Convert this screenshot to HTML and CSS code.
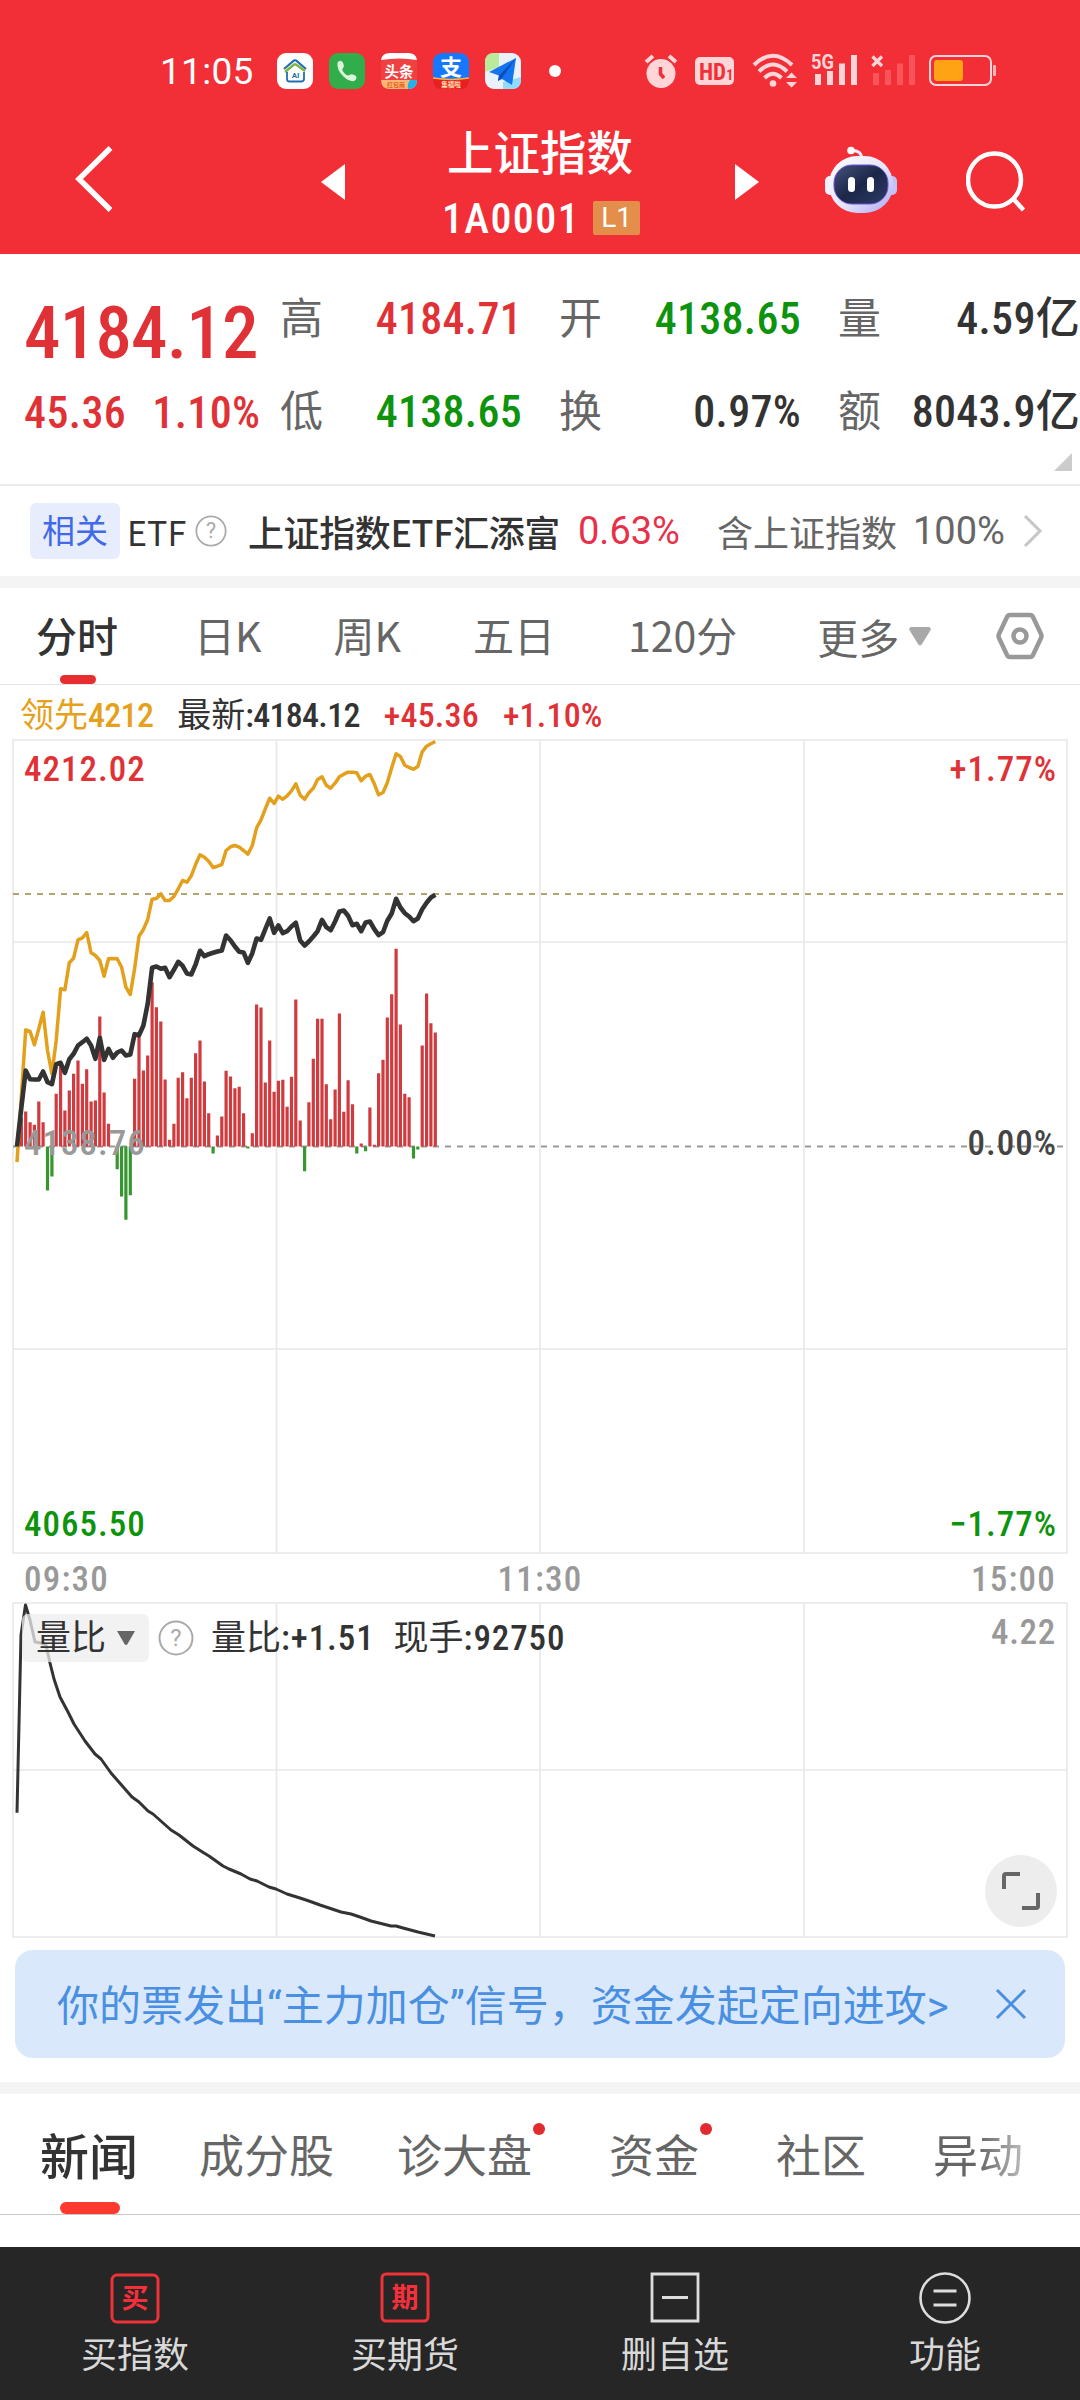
FILE: index.html
```html
<!DOCTYPE html>
<html lang="zh-CN">
<head>
    <meta charset="UTF-8">
    <meta name="viewport" content="width=device-width, initial-scale=1.0">
    <title>上证指数 1A0001</title>
    <link rel="stylesheet" href="styles.css">
</head>
<body>

    <header class="top">
        <div class="status">
            <span class="clock">11:05</span>
            <div class="apps">
                <svg class="app" viewBox="0 0 36 36">
                    <rect width="36" height="36" rx="9" fill="#fff"/>
                    <path d="M7 16 L17 7.500 Q18 7 19 7.500 L29 16" fill="none" stroke="#1f6fb5" stroke-width="2.200"/>
                    <path d="M8 19 L17 11.500 Q18 11 19 11.500 L28 18" fill="none" stroke="#7cb342" stroke-width="2.400"/>
                    <path d="M10 19 V26 Q10 28.500 12.500 28.500 H24 Q27 28.500 27 26 V19" fill="none" stroke="#1f6fb5" stroke-width="1.800"/>
                    <text x="18.500" y="25" text-anchor="middle" font-size="8" font-weight="700" fill="#1f6fb5">AI</text>
                </svg>
                <svg class="app" viewBox="0 0 36 36">
                    <rect width="36" height="36" rx="9" fill="#32ad4b"/>
                    <path d="M8.500 9.500 q2.500 -3 5 -.5 q2.500 4 .5 6 q-1.500 1.500 0 3.500 q2 3 4.500 4 q1.500 0 3 -1 q2 -1 5.500 1.500 q1.500 3 -2 5 q-4.500 1 -10.500 -4.500 q-7 -6.500 -6 -14z" fill="#d9f5dc"/>
                </svg>
                <svg class="app" viewBox="0 0 36 36">
                    <rect width="36" height="36" rx="9" fill="#f04142"/>
                    <path d="M0 7 Q1 0 9 0 H27 Q35 0 36 7 Q18 4 0 7z" fill="#fff"/>
                    <text x="18" y="24" text-anchor="middle" font-size="14.500" font-weight="700" fill="#fff">头条</text>
                    <path d="M0 27 H36 Q36 36 27 36 H9 Q0 36 0 27z" fill="#ffb677"/>
                    <text x="15" y="34" text-anchor="middle" font-size="6" font-weight="700" fill="#e0631d">红包雨</text>
                    <path d="M29 27 H36 Q36 36 27 36 Q26 31 29 27z" fill="#1fb4e8"/>
                </svg>
                <svg class="app" viewBox="0 0 36 36">
                    <rect width="36" height="36" rx="9" fill="#1677ff"/>
                    <text x="18" y="22" text-anchor="middle" font-size="22" font-weight="700" fill="#fff">支</text>
                    <path d="M0 25 Q18 28 36 25 V27 Q36 36 27 36 H9 Q0 36 0 27z" fill="#e8201e"/>
                    <path d="M0 25 Q18 28 36 25" fill="none" stroke="#ffb34d" stroke-width="1.500"/>
                    <text x="18" y="34" text-anchor="middle" font-size="6.500" font-weight="700" fill="#ffe2b0">集福啦</text>
                </svg>
                <svg class="app" viewBox="0 0 36 36">
                    <rect width="36" height="36" rx="9" fill="#e9f2fb"/>
                    <path d="M9 0 H14 V14 L0 19 V9 Q0 0 9 0z" fill="#b9eb9a"/>
                    <path d="M18 29 L36 24 V27 Q36 36 27 36 H18z" fill="#8fdcff"/>
                    <path d="M31 5 L4 19 L14 22.500 L13 28 L17 26 L27 32z" fill="#1573f0"/>
                    <path d="M31 5 L14 22.500 L13 28 L17 25z" fill="#0a4fbd"/>
                </svg>
            </div>
            <i class="more-dot"></i>

            <div class="signals">
                <svg class="alarm" width="34" height="36" viewBox="0 0 34 36">
                    <circle cx="17" cy="20.500" r="14.500" fill="#ffd5d8"/>
                    <path d="M2 9 L9 3 M32 9 L25 3" stroke="#ffd5d8" stroke-width="4"/>
                    <path d="M16.500 14 V21 L20 25" fill="none" stroke="#f22f37" stroke-width="3.500"/>
                </svg>
                <svg class="hd" width="39" height="36" viewBox="0 0 39 36">
                    <rect y="4" width="39" height="28" rx="5" fill="#ffd5d8"/>
                    <text x="4" y="26.500">HD<tspan>1</tspan></text>
                </svg>
                <svg class="wifi" width="46" height="36" viewBox="0 0 46 36">
                    <g fill="none" stroke="#ffd5d8" stroke-width="4">
                        <path d="M2 12 Q21 -6.500 40 12"/>
                        <path d="M7 18.500 Q21 4.500 35 18.500"/>
                        <path d="M12.500 25 Q21 16.500 29.500 25"/>
                    </g>
                    <circle cx="21" cy="30.500" r="3.300" fill="#ffd5d8"/>
                    <path d="M34 25 L39.500 19.500 L45 25z M34 29 L39.500 34.500 L45 29z" fill="#ffd5d8"/>
                </svg>
                <svg class="net" width="48" height="36" viewBox="0 0 48 36">
                    <text x="0" y="16" font-size="20" font-weight="700" textLength="23" lengthAdjust="spacingAndGlyphs" fill="#ffd5d8">5G</text>
                    <path d="M4 21 h6 v11 h-6z M16 18 h6 v14 h-6z M28 10.500 h6 v21.500 h-6z M40 2 h6 v30 h-6z" fill="#ffd5d8"/>
                </svg>
                <svg width="46" height="36" viewBox="0 0 46 36">
                    <path d="M1.500 3.500 L11 13 M11 3.500 L1.500 13" stroke="#ffd5d8" stroke-width="3.200"/>
                    <path d="M2 20 h6 v12 h-6z M14 17 h6 v15 h-6z M26 10.500 h6 v21.500 h-6z M38 2 h6 v30 h-6z" fill="#f9545a"/>
                </svg>
                <svg width="68" height="36" viewBox="0 0 68 36">
                    <rect x="1" y="3" width="61" height="29" rx="6" fill="none" stroke="#ffd5d8" stroke-width="2"/>
                    <rect x="5" y="7" width="29" height="21" rx="3" fill="#ffa314"/>
                    <rect x="64" y="12" width="3" height="11" rx="1" fill="#ffb6ba"/>
                </svg>
            </div>
        </div>

        <nav class="title-bar">
            <svg class="back" width="38" height="66" viewBox="0 0 38 66"><path d="M35.500 2 L4 33 L35.500 64" fill="none" stroke="#fff" stroke-width="5.500"/></svg>
            <svg class="prev" width="24" height="36" viewBox="0 0 24 36"><path d="M24 0 V36 L0 18z" fill="#fff"/></svg>
            <div class="title">
                <h1>上证指数</h1>
                <p><span class="code">1A0001</span><span class="level">L1</span></p>
            </div>
            <svg class="next" width="24" height="36" viewBox="0 0 24 36"><path d="M0 0 V36 L24 18z" fill="#fff"/></svg>
            <svg class="robot" width="72" height="68" viewBox="0 0 72 68">
                <defs>
                    <linearGradient id="shell" x1="0" y1="0" x2="1" y2="1">
                        <stop offset="0" stop-color="#fff"/>
                        <stop offset=".55" stop-color="#e6e4fb"/>
                        <stop offset="1" stop-color="#a9a6f2"/>
                    </linearGradient>
                    <linearGradient id="face" x1="0" y1="0" x2="1" y2="1">
                        <stop offset="0" stop-color="#46527c"/>
                        <stop offset=".5" stop-color="#1c2748"/>
                        <stop offset="1" stop-color="#2c3a66"/>
                    </linearGradient>
                </defs>
                <path d="M26 4.500 Q37 4 36.500 13" fill="none" stroke="#efeafc" stroke-width="3"/>
                <circle cx="26" cy="4.500" r="3.800" fill="#fff"/>
                <rect x="0" y="30" width="12" height="19" rx="5" fill="#f0effd"/>
                <rect x="60" y="30" width="12" height="19" rx="5" fill="#bfc3fb"/>
                <rect x="4" y="10" width="64" height="57" rx="28" fill="url(#shell)"/>
                <rect x="9" y="19" width="54" height="39" rx="18" fill="url(#face)" stroke="#6a55d8" stroke-width="1"/>
                <rect x="23" y="31" width="7" height="15" rx="3.500" fill="#fff"/>
                <rect x="42" y="31" width="7" height="15" rx="3.500" fill="#fff"/>
            </svg>
            <svg class="search" width="60" height="62" viewBox="0 0 60 62">
                <circle cx="28.500" cy="29" r="26.500" fill="none" stroke="#fff" stroke-width="4.500"/>
                <path d="M46.500 47 L57.500 59" stroke="#fff" stroke-width="4.500"/>
            </svg>
        </nav>
    </header>

    <section class="quote">
        <div class="price">
            <strong>4184.12</strong>
            <p><span>45.36</span><span>1.10%</span></p>
        </div>
        <dl>
            <div><dt>高</dt><dd class="up">4184.71</dd></div>
            <div><dt>低</dt><dd class="down">4138.65</dd></div>
        </dl>
        <dl>
            <div><dt>开</dt><dd class="down">4138.65</dd></div>
            <div><dt>换</dt><dd>0.97%</dd></div>
        </dl>
        <dl>
            <div><dt>量</dt><dd>4.59亿</dd></div>
            <div><dt>额</dt><dd>8043.9亿</dd></div>
        </dl>
        <i class="corner"></i>
    </section>

    <section class="etf">
        <span class="tag">相关</span>
        <span class="etf-label">ETF</span>
        <svg class="help" viewBox="0 0 36 36"><circle cx="18" cy="18" r="16.500"/><text x="18" y="26">?</text></svg>
        <span class="etf-name">上证指数ETF汇添富</span>
        <span class="etf-rate">0.63%</span>
        <span class="etf-part">含上证指数</span>
        <span class="etf-pct">100%</span>
        <svg class="arrow" width="20" height="34" viewBox="0 0 20 34"><path d="M2 2 L17 17 L2 32" fill="none" stroke="#c6c6c6" stroke-width="3"/></svg>
    </section>

    <nav class="periods">
        <a class="active">分时</a>
        <a>日K</a>
        <a>周K</a>
        <a>五日</a>
        <a class="min">120分</a>
        <a class="more">更多<svg width="22" height="19" viewBox="0 0 22 19"><path d="M2 0 H20 Q23 1 21 4 L13 17 Q11 20 9 17 L1 4 Q-1 1 2 0z" fill="#a8a8a8"/></svg></a>
        <svg class="gear" width="48" height="48" viewBox="0 0 48 48">
            <path d="M14 3 H34 Q36 3 37 5 L45 22 Q46 24 45 26 L37 43 Q36 45 34 45 H14 Q12 45 11 43 L3 26 Q2 24 3 22 L11 5 Q12 3 14 3z" fill="none" stroke="#999" stroke-width="4.500"/>
            <circle cx="24" cy="24" r="6.500" fill="none" stroke="#999" stroke-width="4.500"/>
        </svg>
    </nav>

    <p class="legend">
        <span class="lead">领先<b>4212</b></span>
        <span class="last">最新<b>:4184.12</b></span>
        <span class="up"><b>+45.36</b></span>
        <span class="up"><b>+1.10%</b></span>
    </p>

    <section class="chart">
        <svg id="minute" width="1056" height="815" viewBox="0 0 1056 815">
            <path class="grid" d="M1 1 H1055 V814 H1 Z M1 203 H1055 M1 610 H1055 M264.500 1 V814 M528 1 V814 M792 1 V814"/>
            <path class="dash now" d="M1 155 H1055"/>
            <path class="dash zero" d="M1 407.500 H1055"/>
            <path id="inflow" class="bar-up"/>
            <path id="outflow" class="bar-down"/>
            <polyline id="lead" class="line-lead"/>
            <polyline id="price" class="line-price"/>
        </svg>
        <span class="mark tl up">4212.02</span>
        <span class="mark tr up">+1.77%</span>
        <span class="mark ml">4138.76</span>
        <span class="mark mr">0.00%</span>
        <span class="mark bl down">4065.50</span>
        <span class="mark br down">−1.77%</span>
    </section>

    <div class="hours"><span>09:30</span><span>11:30</span><span>15:00</span></div>

    <section class="ratio">
        <svg width="1056" height="336" viewBox="12 1602 1056 336">
            <path class="grid" d="M13 1603 H1067 V1937 H13 Z M13 1770 H1067 M276.500 1603 V1937 M540 1603 V1937 M804 1603 V1937"/>
            <polyline class="line-ratio" points="17,1812.700 21,1635 25.500,1605 30,1620 35,1642 41,1643 46,1645 50,1663 54,1679 60,1697 68,1712 74,1724 85,1741 95,1754 101,1759 111,1773 118,1781 132,1797 139,1802 148,1811 153,1814 171,1830 179,1835 193,1846 204,1853 209,1856 223,1866 229,1869 241,1874 250,1879 257,1881 269,1887 276,1889 287,1894 300,1898 309,1901 320,1905 332,1909 341,1912 351,1914 360,1917 371,1921 379,1923 391,1926 396,1926 403,1928 418,1932 435,1936"/>
        </svg>
        <div class="ratio-head">
            <span class="chip">量比<svg width="18" height="14" viewBox="0 0 18 14"><path d="M0 0 H18 L10.500 13 Q9 15 7.500 13z" fill="#666"/></svg></span>
            <svg class="help" viewBox="0 0 36 36"><circle cx="18" cy="18" r="16.500"/><text x="18" y="26">?</text></svg>
            <span class="ratio-val">量比<b>:+1.51</b></span>
            <span class="hand-val">现手<b>:92750</b></span>
            <span class="ratio-max">4.22</span>
        </div>
        <button class="expand"><svg width="38" height="38" viewBox="0 0 38 38"><path d="M2 17 V4 Q2 2 4 2 H18 M36 21 V34 Q36 36 34 36 H20" fill="none" stroke="#666" stroke-width="4"/></svg></button>
    </section>

    <div class="banner">
        <span>你的票发出“主力加仓”信号，资金发起定向进攻&gt;</span>
        <svg width="32" height="32" viewBox="0 0 32 32"><path d="M2 2 L30 30 M30 2 L2 30" stroke="#4a90e2" stroke-width="3"/></svg>
    </div>

    <nav class="news">
        <a class="active">新闻</a>
        <a>成分股</a>
        <a class="dot">诊大盘</a>
        <a class="dot">资金</a>
        <a>社区</a>
        <a class="fade">异动</a>
    </nav>

    <footer class="actions">
        <a><svg width="50" height="52" viewBox="0 0 50 52"><rect x="2" y="3" width="46" height="47" rx="5" fill="none" stroke="#ee3338" stroke-width="3"/><text x="25" y="36" text-anchor="middle" font-size="27" font-weight="700" fill="#f5303a">买</text></svg>买指数</a>
        <a><svg width="50" height="52" viewBox="0 0 50 52"><rect x="2" y="2" width="46" height="47" rx="4" fill="none" stroke="#ee3338" stroke-width="3"/><text x="25" y="35" text-anchor="middle" font-size="27" font-weight="700" fill="#f5303a">期</text></svg>买期货</a>
        <a><svg width="50" height="52" viewBox="0 0 50 52"><path d="M2 2 H48 V49 H2 Z M12 25.500 H38" fill="none" stroke="#ddd" stroke-width="2.800"/></svg>删自选</a>
        <a><svg width="52" height="52" viewBox="0 0 52 52"><circle cx="26" cy="26" r="24.500" fill="none" stroke="#ddd" stroke-width="2.600"/><path d="M14.500 19 H37.500 M14.500 33 H37.500" stroke="#ddd" stroke-width="2.800"/></svg>功能</a>
    </footer>

    <script src="chart.js"></script>
</body>
</html>
```

FILE: styles.css
```css
* {
    box-sizing: border-box;
    margin: 0;
    padding: 0;
}
body {
    width: 1080px;
    height: 2400px;
    overflow: hidden;
    background: #fff;
    color: #333;
    font-family: Roboto, "Noto Sans CJK SC", sans-serif;
    white-space: nowrap;
}
svg {
    display: block;
    flex: none;
}
b {
    font-weight: 500;
}
.up {
    color: #e03236;
}
.down {
    color: #0d930d;
}

/* narrow figures */
.code,
.price,
.quote dd,
.legend b,
.mark,
.hours,
.ratio-head b,
.ratio-max {
    font-stretch: 87%;
}

/* red header */
.top {
    height: 254px;
    background: #f22f37;
    color: #fff;
}
.status {
    display: flex;
    align-items: center;
    height: 108px;
    padding: 34px 83px 0 160px;
}
.clock {
    width: 117px;
    font-size: 37px;
    letter-spacing: 0.300px;
}
.apps {
    display: flex;
    gap: 16px;
}
.app {
    width: 36px;
    height: 36px;
}
.more-dot {
    width: 12px;
    height: 12px;
    margin-left: 28px;
    border-radius: 50%;
    background: #fff;
}
.signals {
    display: flex;
    margin-left: auto;
    gap: 12px;
}
.alarm {
    margin-right: 5px;
}
.hd {
    margin-right: 6px;
}
.hd text {
    font-size: 23px;
    font-weight: 700;
    font-stretch: 75%;
    fill: #f22f37;
}
.hd tspan {
    font-size: 14px;
}
.wifi {
    margin-right: 1px;
}
.net {
    overflow: visible;
}
.title-bar {
    display: flex;
    height: 146px;
}
.back {
    margin: 38px 0 0 75px;
}
.prev {
    margin: 56px 0 0 208px;
}
.title {
    width: 390px;
    text-align: center;
}
.title h1 {
    height: 68px;
    padding-top: 8px;
    font-size: 46.500px;
    line-height: 76px;
    font-weight: 450;
}
.title p {
    display: flex;
    justify-content: center;
    align-items: center;
    height: 84px;
    padding-left: 2px;
}
.code {
    font-size: 42px;
    font-weight: 500;
    letter-spacing: 1.400px;
}
.level {
    width: 47px;
    height: 34px;
    margin-left: 13px;
    border-radius: 2px;
    background: #e38e4a;
    font-size: 28px;
    line-height: 34px;
}
.next {
    margin-top: 56px;
}
.robot {
    margin: 38px 0 0 66px;
}
.search {
    margin: 43px 0 0 69px;
}

/* quote */
.quote {
    position: relative;
    display: flex;
    gap: 37px;
    height: 232px;
    padding: 17px 0 0 24px;
    border-bottom: 2px solid #ebebeb;
}
.price {
    width: 256px;
    margin-right: -37px;
    color: #e03236;
}
.price strong {
    display: block;
    height: 100px;
    padding-top: 14px;
    font-size: 73px;
    line-height: 96px;
    font-weight: 500;
    letter-spacing: -0.800px;
}
.price p {
    display: flex;
    gap: 26px;
    font-size: 44px;
    line-height: 84px;
    font-weight: 500;
    letter-spacing: 0.400px;
}
.quote dl {
    width: 242px;
    padding-top: 4px;
}
.quote dl div {
    display: flex;
    justify-content: space-between;
    height: 93px;
    line-height: 89px;
    font-size: 44px;
}
.quote dt {
    font-size: 43px;
    color: #666;
}
.quote dd {
    font-weight: 500;
    letter-spacing: 0.300px;
}
.corner {
    position: absolute;
    right: 8px;
    bottom: 13px;
    border: 9px solid transparent;
    border-right-color: #ccc;
    border-bottom-color: #ccc;
}
.etf {
    display: flex;
    align-items: center;
    height: 102px;
    padding-left: 30px;
    border-bottom: 12px solid #f4f4f4;
    font-size: 36px;
}
.tag {
    width: 90px;
    height: 56px;
    border-radius: 6px;
    background: #e7edfd;
    color: #4169e8;
    font-size: 33px;
    line-height: 58px;
    text-align: center;
}
.etf-label {
    width: 68px;
    margin-left: 7px;
    font-family: "Noto Sans CJK SC", sans-serif;
    font-size: 34px;
}
.help {
    width: 32px;
    height: 32px;
}
.help circle {
    fill: none;
    stroke: #aaa;
    stroke-width: 2;
}
.help text {
    font-size: 24px;
    text-anchor: middle;
    fill: #aaa;
}
.etf-name {
    width: 330px;
    margin-left: 21px;
    font-family: "Noto Sans CJK SC", sans-serif;
    font-weight: 450;
    letter-spacing: -0.400px;
}
.etf-rate {
    width: 139px;
    color: #e8304a;
    font-size: 38px;
}
.etf-part {
    width: 196px;
    color: #666;
}
.etf-pct {
    width: 110px;
    color: #666;
    font-size: 38px;
}

/* period tabs */
.periods {
    display: flex;
    height: 97px;
    border-bottom: 1px solid #e4e4e4;
    font-family: "Noto Sans CJK SC", sans-serif;
    font-size: 41px;
    line-height: 92px;
    color: #666;
}
.periods a {
    margin-right: 72px;
}
.periods .active,
.news .active {
    position: relative;
    color: #333;
    font-weight: 500;
}
.periods .active {
    margin-left: 36px;
    margin-right: 76px;
}
.periods .active::after {
    content: "";
    position: absolute;
    left: 24px;
    bottom: 0;
    width: 36px;
    height: 9px;
    border-radius: 5px;
    background: #e82d30;
}
.periods .min {
    margin-left: 1px;
    margin-right: 80px;
}
.periods .more {
    display: flex;
    align-items: center;
    gap: 10px;
    margin-right: 65px;
}
.gear {
    margin-top: 24px;
}
.legend {
    display: flex;
    height: 54px;
    padding-left: 20px;
    font-size: 34px;
    line-height: 60px;
}
.legend span {
    margin-right: 24px;
}
.legend b {
    letter-spacing: -0.700px;
}
.legend .up b {
    letter-spacing: 0.200px;
}
.legend .lead {
    color: #e5a11c;
}

/* minute chart */
.chart {
    position: relative;
    height: 815px;
    margin-left: 12px;
}
.grid {
    fill: none;
    stroke: #e8e8e8;
    stroke-width: 1.600px;
}
.dash {
    fill: none;
    stroke: #999;
    stroke-width: 2;
    stroke-dasharray: 6 6;
}
.now {
    stroke: #b5a273;
}
.bar-up,
.bar-down {
    fill: none;
    stroke-width: 3.200px;
    stroke: #cf3b3e;
}
.bar-down {
    stroke: #37962f;
}
.line-lead,
.line-price,
.line-ratio {
    fill: none;
    stroke: #e2a01c;
    stroke-width: 3.500px;
    stroke-linejoin: round;
}
.line-price {
    stroke: #333;
    stroke-width: 4.600px;
}
.line-ratio {
    stroke: #333;
    stroke-width: 3px;
}
.mark {
    position: absolute;
    font-size: 35px;
    line-height: 40px;
    font-weight: 500;
    letter-spacing: 1px;
}
.tl, .ml, .bl {
    left: 12px;
}
.tr, .mr, .br {
    right: 23px;
}
.tl, .tr {
    top: 11px;
}
.ml, .mr {
    top: 385px;
}
.ml {
    color: #999;
}
.mr {
    color: #444;
}
.bl, .br {
    bottom: 9px;
}
.hours {
    display: grid;
    grid-template-columns: 1fr 1fr 1fr;
    height: 48px;
    padding: 0 24px;
    font-size: 35px;
    line-height: 51px;
    font-weight: 500;
    letter-spacing: 1.200px;
    color: #999;
}
.hours span:nth-child(2) {
    text-align: center;
}
.hours span:nth-child(3) {
    text-align: right;
}
.ratio {
    position: relative;
    height: 348px;
    margin-left: 12px;
}
.ratio-head {
    position: absolute;
    top: 12px;
    left: 10px;
    right: 24px;
    display: flex;
    align-items: center;
    height: 48px;
    font-size: 35px;
    line-height: 49px;
}
.ratio-head b {
    letter-spacing: 0.900px;
}
.chip {
    display: flex;
    align-items: center;
    gap: 11px;
    width: 127px;
    height: 48px;
    padding-left: 14px;
    border-radius: 6px;
    background: rgba(238, 238, 238, 0.750);
}
.ratio-head .help {
    width: 36px;
    height: 36px;
    margin-left: 9px;
}
.ratio-val {
    margin-left: 17px;
}
.hand-val {
    margin-left: 19px;
}
.ratio-max {
    margin: -11px 0 0 auto;
    font-weight: 500;
    letter-spacing: 0.700px;
    color: #999;
}
.expand {
    position: absolute;
    left: 973px;
    top: 253px;
    display: flex;
    align-items: center;
    justify-content: center;
    width: 72px;
    height: 72px;
    border: 0;
    border-radius: 50%;
    background: #ededed;
}
.banner {
    display: flex;
    align-items: center;
    justify-content: space-between;
    height: 108px;
    margin: 0 15px 24px;
    padding: 0 38px 0 42px;
    border-radius: 18px;
    background: #dae8fb;
    color: #4a90e2;
    font-size: 42px;
}
.banner span {
    margin-top: -3px;
}

/* content tabs */
.news {
    display: flex;
    height: 133px;
    padding-left: 40px;
    border-top: 12px solid #f4f4f4;
    border-bottom: 1px solid #c8c8c8;
    font-size: 45px;
    line-height: 127px;
    color: #666;
}
.news a {
    position: relative;
    height: 120px;
    margin-right: 77px;
}
.news .active {
    margin-right: 61px;
    font-size: 49px;
    line-height: 129px;
}
.news a:nth-child(2) {
    margin-right: 63px;
}
.news a:nth-child(5) {
    margin-right: 67px;
}
.news .active::after {
    content: "";
    position: absolute;
    left: 20px;
    bottom: 0;
    width: 60px;
    height: 12px;
    border-radius: 6px;
    background: #fd3930;
}
.news .dot::after {
    content: "";
    position: absolute;
    top: 29px;
    right: -13px;
    width: 12px;
    height: 12px;
    border-radius: 50%;
    background: #e12b2e;
}
.news .fade {
    margin: 0;
    background: linear-gradient(90deg, #666 50%, #bbb 100%);
    background-clip: text;
    -webkit-background-clip: text;
    color: transparent;
}
.actions {
    display: flex;
    height: 154px;
    margin-top: 32px;
    background: #262626;
    color: #d8d8d8;
    font-size: 36px;
    line-height: 61px;
}
.actions a {
    display: flex;
    flex: 1;
    flex-direction: column;
    align-items: center;
    gap: 2px;
    padding-top: 25px;
}
```

FILE: chart.js
```js
// minute chart, one value per minute since 09:30, three units to a pixel
const STEP = 4.357;
const X0 = 5;
const ZERO = 407.5;

// capital flow per minute, negative is drawn below the zero line
const flow = [0, 88, 105, 73, 65, 135, 73, -132, -90, 158, 248, 108, 168, 218, 258, 188, 232, 135, 138, 390,
    162, 68, 0, -68, -150, -220, -146, 203, 343, 228, 273, 493, 418, 375, 201, 20, 68, 206, 223, 145,
    206, 280, 318, 195, 100, -21, 33, 90, 227, 210, 175, 179, 100, -6, 40, 426, 417, 192, 318, 164,
    197, 200, 119, 209, 441, 78, -74, 133, 263, 383, 383, 187, 82, 171, 399, 104, 199, 127, -21, 9,
    -14, 117, 5, 220, 260, 387, 457, 593, 366, 158, 148, -36, -9, 303, 459, 370, 342];

// line heights measured down the plot, 1248 is the zero line
const lead = [1295, 1095, 898, 903, 943, 895, 845, 960, 1030, 930, 775, 778, 697, 683, 628, 622, 606, 667, 675, 690,
    737, 685, 684, 685, 710, 770, 792, 715, 617, 597, 567, 506, 504, 490, 510, 510, 498, 475, 450, 455,
    436, 402, 373, 380, 392, 411, 407, 402, 360, 349, 345, 350, 360, 371, 345, 292, 268, 235, 203, 219,
    197, 206, 196, 181, 160, 194, 206, 187, 173, 147, 139, 164, 173, 158, 139, 131, 125, 125, 127, 151,
    137, 132, 160, 193, 186, 157, 112, 70, 78, 104, 111, 116, 108, 64, 47, 40, 33];

const price = [1248, 1130, 1020, 1046, 1047, 1047, 1023, 1055, 1061, 1001, 997, 1027, 986, 970, 945, 935, 925, 945, 985, 922,
    988, 955, 982, 966, 960, 975, 972, 911, 914, 885, 820, 712, 708, 715, 712, 740, 718, 694, 706, 729,
    732, 702, 661, 677, 671, 667, 663, 660, 615, 629, 648, 664, 666, 697, 668, 624, 628, 596, 564, 607,
    585, 608, 602, 588, 577, 630, 645, 633, 618, 602, 568, 590, 599, 573, 543, 540, 556, 584, 580, 602,
    576, 573, 596, 614, 605, 571, 549, 505, 531, 548, 558, 572, 564, 536, 517, 501, 493];

const x = i => (X0 + i * STEP).toFixed(1);
const bars = test => flow
    .map((v, i) => (test(v) ? `M${x(i)} ${ZERO}v${(-v / 3).toFixed(1)}` : ''))
    .join('');
const points = list => list
    .map((v, i) => `${x(i)},${(ZERO + (v - 1248) / 3).toFixed(1)}`)
    .join(' ');

document.getElementById('inflow').setAttribute('d', bars(v => v > 0));
document.getElementById('outflow').setAttribute('d', bars(v => v < 0));
document.getElementById('lead').setAttribute('points', points(lead));
document.getElementById('price').setAttribute('points', points(price));
```
